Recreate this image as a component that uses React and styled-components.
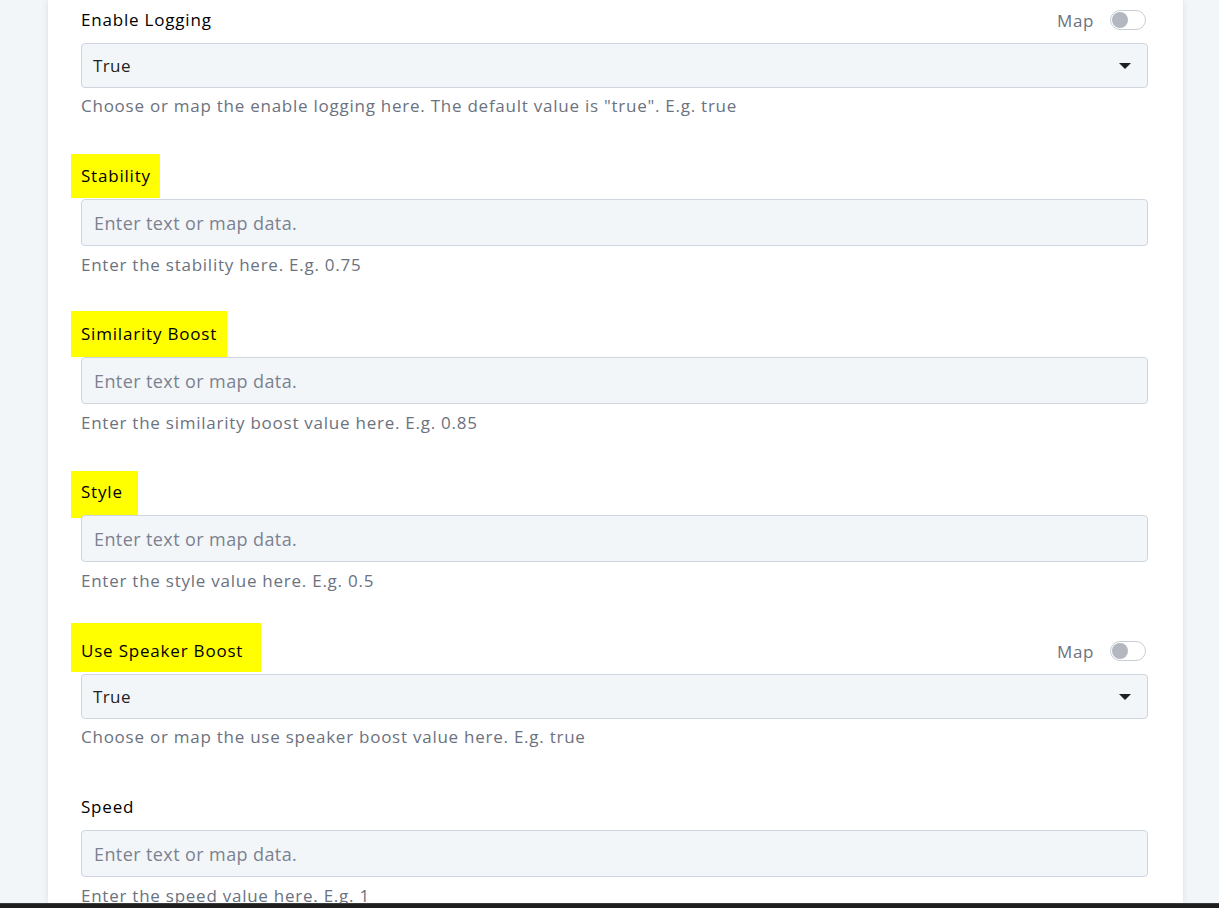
import React from "react";
import styled, { createGlobalStyle } from "styled-components";

const Global = createGlobalStyle`
  html, body { margin: 0; padding: 0; height: 100%; }
  body {
    background: #f3f6f9;
    font-family: "Open Sans", Lato, Arial, sans-serif;
    overflow: hidden;
  }
  #root { height: 100%; }
`;

const Page = styled.div`
  height: 908px;
  display: flex;
  flex-direction: column;
`;

const Viewport = styled.div`
  flex: 1;
  overflow: hidden;
  padding-left: 48px;
`;

const Panel = styled.div`
  width: 1135px;
  height: 100%;
  box-sizing: border-box;
  background: #ffffff;
  box-shadow: 0 0 6px rgba(30, 45, 70, 0.12);
  padding: 8px 35px 0 33px;
  display: flex;
  flex-direction: column;
`;

const Field = styled.div`
  display: flex;
  flex-direction: column;
  margin-bottom: ${(p) => p.$gap}px;
`;

const LabelRow = styled.div`
  display: flex;
  align-items: center;
  justify-content: space-between;
  height: 24px;
  margin-bottom: 11px;
`;

const Label = styled.span`
  font-size: 17px;
  letter-spacing: 0.8px;
  color: #000;
  line-height: 24px;
  display: inline-block;
  ${(p) =>
    p.$hl &&
    `
    background: #ffff00;
    padding: ${p.$hl[0]}px ${p.$hl[1]}px ${p.$hl[2]}px 10px;
    margin: -${p.$hl[0]}px -${p.$hl[1]}px -${p.$hl[2]}px -10px;
  `}
`;

const MapToggle = styled.div`
  display: flex;
  align-items: center;
  gap: 16px;
  margin-right: 2px;
  font-size: 17px;
  letter-spacing: 0.6px;
  color: #6b7280;
`;

const Switch = styled.span`
  width: 33px;
  height: 18px;
  border: 1px solid #c8cdd5;
  border-radius: 10px;
  background: #fff;
  display: flex;
  align-items: center;
  padding-left: 1px;
  &::before {
    content: "";
    width: 16px;
    height: 16px;
    border-radius: 50%;
    background: #b3b8c0;
  }
`;

const TextInput = styled.input`
  box-sizing: border-box;
  height: 47px;
  width: 100%;
  border: 1px solid #cfd5de;
  border-radius: 4px;
  background: #f3f6f9;
  padding: 0 12px;
  font-family: inherit;
  font-size: 18px;
  letter-spacing: 0.4px;
  color: #222;
  outline: none;
  &::placeholder { color: #7b8290; }
`;

const Select = styled.div`
  box-sizing: border-box;
  height: 45px;
  border: 1px solid #cfd5de;
  border-radius: 4px;
  background: #f3f6f9;
  padding: 0 11px 0 11px;
  display: flex;
  align-items: center;
  justify-content: space-between;
  font-size: 17px;
  letter-spacing: 0.4px;
  color: #222;
`;

const Caret = styled.span`
  width: 0;
  height: 0;
  border-left: 6px solid transparent;
  border-right: 6px solid transparent;
  border-top: 6px solid #1f1f1f;
  margin-right: 5px;
`;

const Hint = styled.div`
  font-size: 17px;
  letter-spacing: 0.75px;
  line-height: 24px;
  color: #6b7280;
  margin-top: ${(p) => p.$top}px;
`;

const BottomBar = styled.div`
  height: 5px;
  background: #1e1e1e;
  border-top: 1px solid #3a3a3a;
  box-sizing: border-box;
`;

const fields = [
  { label: "Enable Logging", type: "select", value: "True", map: true,
    hint: 'Choose or map the enable logging here. The default value is "true". E.g. true', gap: 46 },
  { label: "Stability", hl: [10, 9, 10], hint: "Enter the stability here. E.g. 0.75", gap: 45 },
  { label: "Similarity Boost", hl: [11, 10, 11], hint: "Enter the similarity boost value here. E.g. 0.85", gap: 45 },
  { label: "Style", hl: [9, 15, 14], hint: "Enter the style value here. E.g. 0.5", gap: 46 },
  { label: "Use Speaker Boost", type: "select", value: "True", map: true, hl: [16, 18, 9],
    hint: "Choose or map the use speaker boost value here. E.g. true", gap: 46 },
  { label: "Speed", hint: "Enter the speed value here. E.g. 1", gap: 0 },
];

export default function App() {
  return (
    <Page>
      <Global />
      <Viewport>
        <Panel>
          {fields.map((f) => (
            <Field key={f.label} $gap={f.gap}>
              <LabelRow>
                <Label $hl={f.hl}>{f.label}</Label>
                {f.map && (
                  <MapToggle>
                    Map
                    <Switch />
                  </MapToggle>
                )}
              </LabelRow>
              {f.type === "select" ? (
                <Select>
                  {f.value}
                  <Caret />
                </Select>
              ) : (
                <TextInput placeholder="Enter text or map data." />
              )}
              <Hint $top={f.type === "select" ? 6 : 7}>{f.hint}</Hint>
            </Field>
          ))}
        </Panel>
      </Viewport>
      <BottomBar />
    </Page>
  );
}
